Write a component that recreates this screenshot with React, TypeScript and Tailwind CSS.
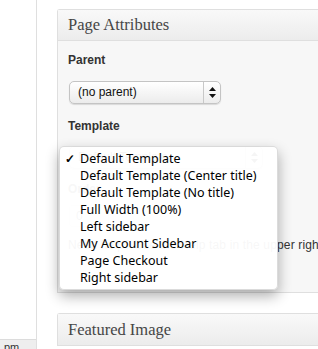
import React from "react";

function Arrows() {
  return (
    <svg width="7" height="11" viewBox="0 0 7 11">
      <path d="M3.5 0 L7 4 L0 4 Z" fill="#111" />
      <path d="M0 7 L7 7 L3.5 11 Z" fill="#111" />
    </svg>
  );
}

function Select({ label, width }: { label: string; width: number }) {
  return (
    <div
      className="flex h-[23px] items-stretch rounded-[5px] border border-[#c4c4c4] bg-gradient-to-b from-[#ffffff] to-[#ececec] shadow-[0_1px_1px_rgba(0,0,0,0.12)]"
      style={{ width }}
    >
      <div className="flex-1 pl-[8px] text-[12px] leading-[21px] text-[#111]">{label}</div>
      <div className="flex w-[17px] items-center justify-center border-l border-[#c8c8c8]">
        <Arrows />
      </div>
    </div>
  );
}

const items = [
  "Default Template",
  "Default Template (Center title)",
  "Default Template (No title)",
  "Full Width (100%)",
  "Left sidebar",
  "My Account Sidebar",
  "Page Checkout",
  "Right sidebar",
];

export default function App() {
  return (
    <div
      className="relative flex h-[349px] w-[318px] overflow-hidden bg-white"
      style={{ fontFamily: '"Liberation Sans", Arial, sans-serif' }}
    >
      <div className="flex w-[37px] shrink-0 flex-col justify-end border-r border-[#dfdfdf]">
        <div className="h-[10px] overflow-hidden border-t border-[#dcdcdc] bg-[#eeeeee] pl-[4px] pt-[1px] text-[11px] leading-[12px] text-[#333]">
          pm
        </div>
      </div>
      <div className="min-w-0 flex-1 pl-[20px] pt-[9px]">
        <div className="w-[300px] rounded-tl-[3px] border-b border-l border-t border-[#dfdfdf] bg-[#f7f7f7]">
          <div
            className="h-[31px] border-b border-[#dfdfdf] bg-gradient-to-b from-[#f9f9f9] to-[#ececec] pl-[10px] text-[16.5px] leading-[30px] text-[#464646]"
            style={{ fontFamily: '"Liberation Serif", Georgia, serif' }}
          >
            Page Attributes
          </div>
          <div className="px-[10px] pb-[39px] pt-[11px] text-[#333]">
            <div className="text-[12px] font-bold leading-[16px]">Parent</div>
            <div className="ml-[1px] mt-[13px]">
              <Select label="(no parent)" width={152} />
            </div>
            <div className="mt-[14px] text-[12px] font-bold leading-[16px]">Template</div>
            <div className="ml-[1px] mt-[12px]">
              <Select label="Default Template" width={194} />
            </div>
            <div className="mt-[12px] text-[12px] font-bold leading-[16px]">Order</div>
            <div className="ml-[1px] mt-[8px] h-[22px] w-[40px] rounded-[3px] border border-[#dfdfdf] bg-white pl-[6px] text-[12px] leading-[20px]">
              0
            </div>
            <div className="mt-[10px] whitespace-nowrap text-[12px] leading-[16px] tracking-[0.15px]">
              Need help? Use the Help tab in the upper right of your screen.
            </div>
          </div>
        </div>
        <div className="mt-[20px] w-[300px] rounded-tl-[3px] border-l border-t border-[#dfdfdf] bg-[#f7f7f7]">
          <div
            className="h-[32px] border-b border-[#dfdfdf] bg-gradient-to-b from-[#f9f9f9] to-[#ececec] pl-[10px] text-[16.5px] leading-[31px] text-[#464646]"
            style={{ fontFamily: '"Liberation Serif", Georgia, serif' }}
          >
            Featured Image
          </div>
        </div>
      </div>

      <div
        className="absolute left-[59px] top-[146px] w-[219px] rounded-[5px] border border-[rgba(0,0,0,0.14)] bg-[rgba(255,255,255,0.96)] py-[3px] shadow-[0_6px_14px_rgba(0,0,0,0.32)]"
        style={{ fontFamily: '"Noto Sans", "Lucida Grande", sans-serif' }}
      >
        {items.map((it, i) => (
          <div key={it} className="relative h-[17px] pl-[20px] text-[12.5px] leading-[17px] text-black">
            {i === 0 && (
              <span className="absolute left-[5px] top-0 text-[12px] font-bold leading-[17px]">✓</span>
            )}
            {it}
          </div>
        ))}
      </div>
    </div>
  );
}
